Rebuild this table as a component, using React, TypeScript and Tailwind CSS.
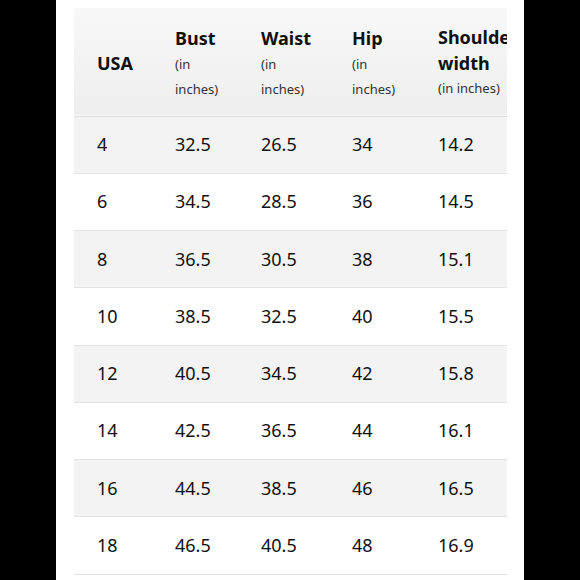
const rows = [
  { usa: '4', bust: '32.5', waist: '26.5', hip: '34', shoulder: '14.2' },
  { usa: '6', bust: '34.5', waist: '28.5', hip: '36', shoulder: '14.5' },
  { usa: '8', bust: '36.5', waist: '30.5', hip: '38', shoulder: '15.1' },
  { usa: '10', bust: '38.5', waist: '32.5', hip: '40', shoulder: '15.5' },
  { usa: '12', bust: '40.5', waist: '34.5', hip: '42', shoulder: '15.8' },
  { usa: '14', bust: '42.5', waist: '36.5', hip: '44', shoulder: '16.1' },
  { usa: '16', bust: '44.5', waist: '38.5', hip: '46', shoulder: '16.5' },
  { usa: '18', bust: '46.5', waist: '40.5', hip: '48', shoulder: '16.9' },
]

const App = () => {
  return (
    <div
      className="flex w-[580px] h-[580px] overflow-hidden bg-black text-[#0f1111]"
      style={{ fontFamily: '"Noto Sans", "Open Sans", Arial, sans-serif' }}
    >
      <div className="w-[56px] shrink-0 bg-black" />

      <div className="w-[468px] shrink-0 bg-white pl-[18px] pt-[8px]">
        {/* Tabla de tallas */}
        <div className="w-[433px] overflow-hidden">
          <table className="table-fixed w-[490px] border-collapse">
            <colgroup>
              <col className="w-[79px]" />
              <col className="w-[86px]" />
              <col className="w-[91px]" />
              <col className="w-[86px]" />
              <col className="w-[148px]" />
            </colgroup>
            <thead>
              <tr className="h-[108px] bg-gradient-to-b from-[#f8f8f8] to-[#eeeeee] border-b border-[#dddddd]">
                <th className="pl-[23px] pr-2 pt-[3px] text-left align-middle text-[18px] font-bold leading-[27px]">
                  USA
                </th>
                <th className="pl-[22px] pr-2 pt-[3px] text-left align-middle">
                  <div className="text-[18px] font-bold leading-[27px]">Bust</div>
                  <div className="text-[13px] font-normal leading-[25px] text-[#333]">(in</div>
                  <div className="text-[13px] font-normal leading-[25px] text-[#333]">inches)</div>
                </th>
                <th className="pl-[22px] pr-2 pt-[3px] text-left align-middle">
                  <div className="text-[18px] font-bold leading-[27px]">Waist</div>
                  <div className="text-[13px] font-normal leading-[25px] text-[#333]">(in</div>
                  <div className="text-[13px] font-normal leading-[25px] text-[#333]">inches)</div>
                </th>
                <th className="pl-[22px] pr-2 pt-[3px] text-left align-middle">
                  <div className="text-[18px] font-bold leading-[27px]">Hip</div>
                  <div className="text-[13px] font-normal leading-[25px] text-[#333]">(in</div>
                  <div className="text-[13px] font-normal leading-[25px] text-[#333]">inches)</div>
                </th>
                <th className="pl-[22px] pr-2 pt-[1px] text-left align-middle">
                  <div className="text-[18px] font-bold leading-[26px]">
                    Shoulder
                    <br />
                    width
                  </div>
                  <div className="text-[13px] font-normal leading-[25px] text-[#333] whitespace-nowrap">
                    (in inches)
                  </div>
                </th>
              </tr>
            </thead>
            <tbody>
              {rows.map((row, i) => (
                <tr
                  key={row.usa}
                  className={`h-[57.25px] border-b border-[#e3e3e3] text-[18px] ${
                    i % 2 === 0 ? 'bg-[#f3f3f3]' : 'bg-white'
                  }`}
                >
                  <td className="pl-[23px] align-middle">{row.usa}</td>
                  <td className="pl-[22px] align-middle">{row.bust}</td>
                  <td className="pl-[22px] align-middle">{row.waist}</td>
                  <td className="pl-[22px] align-middle">{row.hip}</td>
                  <td className="pl-[22px] align-middle">{row.shoulder}</td>
                </tr>
              ))}
            </tbody>
          </table>
        </div>
      </div>

      <div className="flex-1 bg-black" />
    </div>
  )
}

export default App
